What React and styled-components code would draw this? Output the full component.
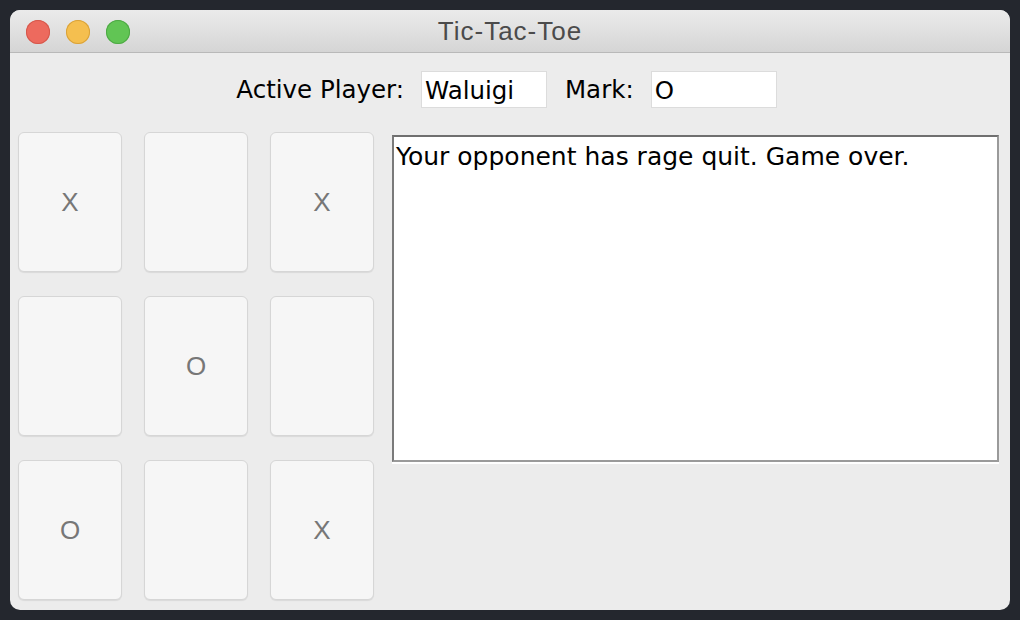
import React from 'react'
import styled, { createGlobalStyle } from 'styled-components'

const Global = createGlobalStyle`
    html, body { margin: 0; padding: 0; background: #24272e; }
    body { width: 1020px; height: 620px; overflow: hidden; }
`

const cells = ['X', '', 'X', '', 'O', '', 'O', '', 'X']

export default function App() {
    return (
        <>
            <Global />
            <Screen>
                <Window>
                    <Titlebar>
                        <Lights>
                            <Light color="#ed6a5e" edge="#d5584c" />
                            <Light color="#f5bf4f" edge="#d9a23a" />
                            <Light color="#61c554" edge="#4ea845" />
                        </Lights>
                        <Title>Tic-Tac-Toe</Title>
                    </Titlebar>
                    <Content>
                        <Header>
                            <Label>Active Player:</Label>
                            <Field>Waluigi</Field>
                            <Label>Mark:</Label>
                            <Field>O</Field>
                        </Header>
                        <Body>
                            <Board>
                                {cells.map((c, i) => (
                                    <Cell key={i}>{c}</Cell>
                                ))}
                            </Board>
                            <Side>
                                <Log>Your opponent has rage quit. Game over.</Log>
                            </Side>
                        </Body>
                    </Content>
                </Window>
            </Screen>
        </>
    )
}

const Screen = styled.div`
    width: 1020px;
    height: 620px;
    padding: 10px;
    box-sizing: border-box;
`
const Window = styled.div`
    width: 1000px;
    height: 600px;
    border-radius: 10px;
    overflow: hidden;
    background: #ececec;
    display: flex;
    flex-direction: column;
`
const Titlebar = styled.div`
    height: 43px;
    flex: none;
    position: relative;
    display: flex;
    align-items: center;
    justify-content: center;
    background: linear-gradient(#ebebeb, #d5d5d5);
    border-bottom: 1px solid #b9b9b9;
    box-sizing: border-box;
`
const Lights = styled.div`
    position: absolute;
    left: 16px;
    top: 10px;
    display: flex;
    gap: 16px;
`
const Light = styled.span`
    width: 24px;
    height: 24px;
    border-radius: 50%;
    background: ${p => p.color};
    box-shadow: inset 0 0 0 1px ${p => p.edge};
`
const Title = styled.div`
    font-family: "Liberation Sans", Arial, sans-serif;
    font-size: 26px;
    letter-spacing: 1px;
    color: #4b4b4b;
    margin-top: 1px;
`
const Content = styled.div`
    flex: 1;
    display: flex;
    flex-direction: column;
    padding: 18px 11px 0 8px;
`
const Header = styled.div`
    display: flex;
    justify-content: center;
    align-items: center;
    height: 37px;
    padding-left: 14px;
`
const Label = styled.span`
    font-family: "DejaVu Sans", sans-serif;
    font-size: 24.5px;
    color: #000;
    margin-right: 17px;
    & + div { margin-right: 18px; }
`
const Field = styled.div`
    width: 126px;
    height: 37px;
    box-sizing: border-box;
    background: #fff;
    border: 1px solid #dcdcdc;
    font-family: "DejaVu Sans", sans-serif;
    font-size: 24.5px;
    color: #000;
    display: flex;
    align-items: center;
    padding: 1px 3px 0;
`
const Body = styled.div`
    display: flex;
    margin-top: 24px;
    gap: 18px;
`
const Board = styled.div`
    display: grid;
    grid-template-columns: repeat(3, 104px);
    grid-template-rows: repeat(3, 140px);
    column-gap: 22px;
    row-gap: 24px;
`
const Cell = styled.button`
    background: #f6f6f6;
    border: 1px solid #d6d6d6;
    border-radius: 6px;
    box-shadow: 0 1px 1px rgba(0, 0, 0, 0.08);
    font-family: "Liberation Sans", Arial, sans-serif;
    font-size: 26px;
    color: #777;
    padding: 0;
`
const Side = styled.div`
    flex: 1;
    padding-top: 3px;
`
const Log = styled.div`
    height: 327px;
    box-sizing: border-box;
    background: #fff;
    border: 2px solid #9a9a9a;
    border-top-color: #6f6f6f;
    border-left-color: #7a7a7a;
    box-shadow: 0 2px 0 #fff;
    font-family: "DejaVu Sans", sans-serif;
    font-size: 25px;
    color: #000;
    padding: 5px 2px;
    line-height: 1.2;
`
